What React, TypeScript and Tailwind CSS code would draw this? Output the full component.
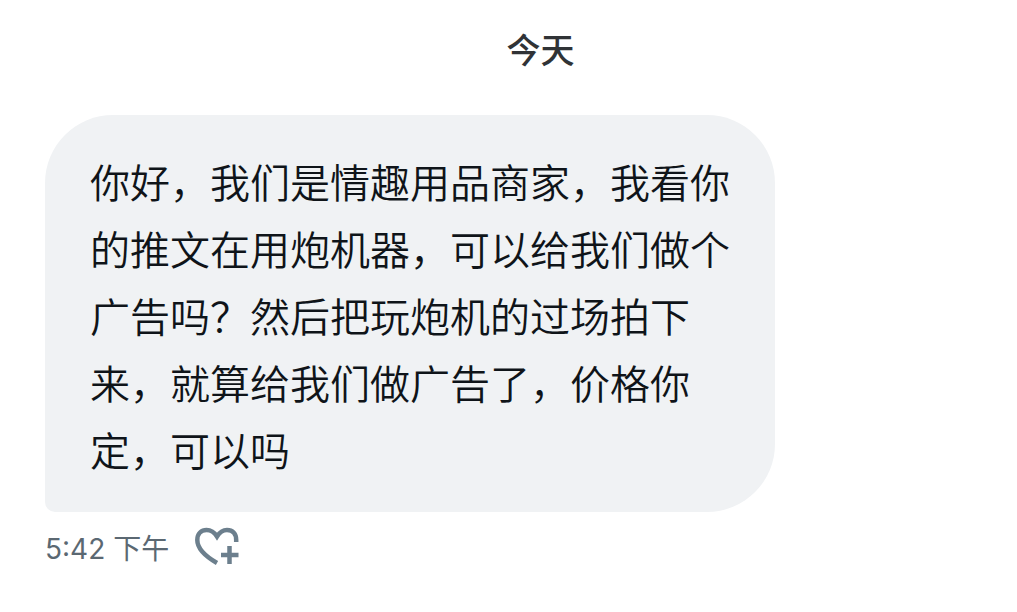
export default function App() {
  return (
    <main className="min-h-screen bg-white px-[45px] pt-[26px] font-['Inter','Noto_Sans_CJK_SC',sans-serif] text-[#0f1419]">
      <h1 className="pl-[64px] text-center text-[34px] leading-[50px] font-medium text-[#303336]">
        今天
      </h1>
      <section className="mt-[39px]">
        <p className="w-fit max-w-[730px] rounded-[68px] rounded-bl-[10px] bg-[#f0f2f4] px-[45px] pt-[33px] pb-[29px] font-['Noto_Sans_CJK_SC',sans-serif] text-[40px] leading-[67px] font-[350]">
          你好，我们是情趣用品商家，我看你的推文在用炮机器，可以给我们做个广告吗？然后把玩炮机的过场拍下来，就算给我们做广告了，价格你定，可以吗
        </p>
        <div className="mt-3 flex items-center gap-[26px] text-[#5b6872]">
          <time className="pt-1 text-[28px] leading-[42px]">5:42 下午</time>
          <button type="button" aria-label="添加回应" className="text-[#6c7f8d]">
            <svg viewBox="0 0 44 40" className="h-10 w-11" fill="none" stroke="currentColor">
              <path strokeWidth="4.500" d="M22 36C9 28.5 2.300 20.5 2.300 13C2.300 6.5 6.5 3 11.5 3C16 3 19.5 5.5 22 9.5C24.500 5.5 28 3 32 3C37.500 3 41.200 6.500 41.200 13V15" />
              <path strokeWidth="4.500" d="M34.500 19V37M26 28H43.500" />
            </svg>
          </button>
        </div>
      </section>
    </main>
  );
}
